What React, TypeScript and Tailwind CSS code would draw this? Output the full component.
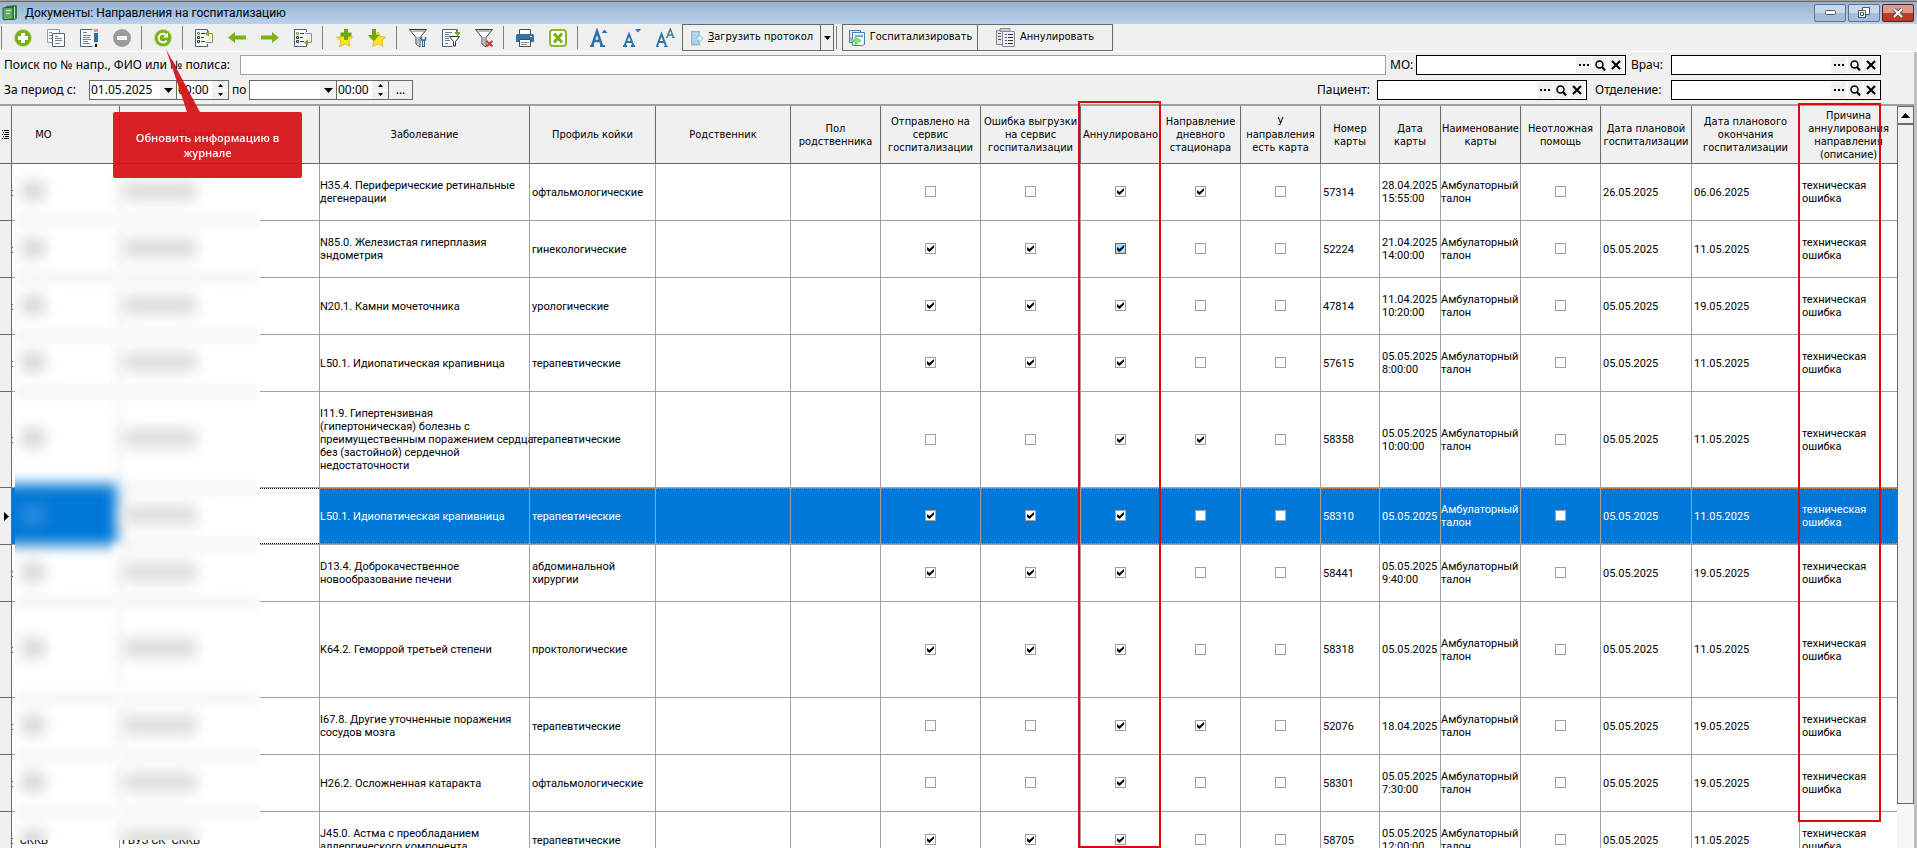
import type { ReactNode } from "react";

type Row = {
  disease: string;
  profile: string;
  flags: [number, number, number, number, number];
  card: string;
  cardDate: string;
  planned: string;
  finish: string;
  tall?: boolean;
  selected?: boolean;
  hot?: boolean;
};

const rows: Row[] = [
  { disease: "H35.4. Периферические ретинальные\nдегенерации", profile: "офтальмологические", flags: [0, 0, 1, 1, 0], card: "57314", cardDate: "28.04.2025\n15:55:00", planned: "26.05.2025", finish: "06.06.2025" },
  { disease: "N85.0. Железистая гиперплазия\nэндометрия", profile: "гинекологические", flags: [1, 1, 1, 0, 0], card: "52224", cardDate: "21.04.2025\n14:00:00", planned: "05.05.2025", finish: "11.05.2025", hot: true },
  { disease: "N20.1. Камни мочеточника", profile: "урологические", flags: [1, 1, 1, 0, 0], card: "47814", cardDate: "11.04.2025\n10:20:00", planned: "05.05.2025", finish: "19.05.2025" },
  { disease: "L50.1. Идиопатическая крапивница", profile: "терапевтические", flags: [1, 1, 1, 0, 0], card: "57615", cardDate: "05.05.2025\n8:00:00", planned: "05.05.2025", finish: "11.05.2025" },
  { disease: "I11.9. Гипертензивная\n(гипертоническая) болезнь с\nпреимущественным поражением сердца\nбез (застойной) сердечной\nнедостаточности", profile: "терапевтические", flags: [0, 0, 1, 1, 0], card: "58358", cardDate: "05.05.2025\n10:00:00", planned: "05.05.2025", finish: "11.05.2025", tall: true },
  { disease: "L50.1. Идиопатическая крапивница", profile: "терапевтические", flags: [1, 1, 1, 0, 0], card: "58310", cardDate: "05.05.2025", planned: "05.05.2025", finish: "11.05.2025", selected: true },
  { disease: "D13.4. Доброкачественное\nновообразование печени", profile: "абдоминальной\nхирургии", flags: [1, 1, 1, 0, 0], card: "58441", cardDate: "05.05.2025\n9:40:00", planned: "05.05.2025", finish: "19.05.2025" },
  { disease: "K64.2. Геморрой третьей степени", profile: "проктологические", flags: [1, 1, 1, 0, 0], card: "58318", cardDate: "05.05.2025", planned: "05.05.2025", finish: "11.05.2025", tall: true },
  { disease: "I67.8. Другие уточненные поражения\nсосудов мозга", profile: "терапевтические", flags: [0, 0, 1, 1, 0], card: "52076", cardDate: "18.04.2025", planned: "05.05.2025", finish: "19.05.2025" },
  { disease: "H26.2. Осложненная катаракта", profile: "офтальмологические", flags: [0, 0, 1, 0, 0], card: "58301", cardDate: "05.05.2025\n7:30:00", planned: "05.05.2025", finish: "19.05.2025" },
  { disease: "J45.0. Астма с преобладанием\nаллергического компонента", profile: "терапевтические", flags: [1, 1, 1, 0, 0], card: "58705", cardDate: "05.05.2025\n12:00:00", planned: "05.05.2025", finish: "11.05.2025" },
];

const columns = [
  { title: "МО", col: "w-[108px]" },
  { title: "Подразделение", col: "w-[200px]" },
  { title: "Заболевание", col: "w-[210px]" },
  { title: "Профиль койки", col: "w-[126px]" },
  { title: "Родственник", col: "w-[135px]" },
  { title: "Пол\nродственника", col: "w-[90px]" },
  { title: "Отправлено на\nсервис\nгоспитализации", col: "w-[100px]" },
  { title: "Ошибка выгрузки\nна сервис\nгоспитализации", col: "w-[100px]" },
  { title: "Аннулировано", col: "w-[80px]" },
  { title: "Направление\nдневного\nстационара", col: "w-[80px]" },
  { title: "У\nнаправления\nесть карта", col: "w-[80px]" },
  { title: "Номер\nкарты", col: "w-[59px]" },
  { title: "Дата\nкарты", col: "w-[61px]" },
  { title: "Наименование\nкарты", col: "w-[80px]" },
  { title: "Неотложная\nпомощь", col: "w-[80px]" },
  { title: "Дата плановой\nгоспитализации", col: "w-[91px]" },
  { title: "Дата планового\nокончания\nгоспитализации", col: "w-[108px]" },
  { title: "Причина\nаннулирования\nнаправления\n(описание)", col: "" },
];

const flagNames = ["Отправлено на сервис", "Ошибка выгрузки", "Аннулировано", "Дневной стационар", "Есть карта"];

function Svg({ children }: { children: ReactNode }) {
  return (
    <svg width="20" height="20" viewBox="0 0 20 20" fill="none" aria-hidden="true">
      {children}
    </svg>
  );
}

const AddIcon = () => (
  <Svg>
    <circle cx="10" cy="10" r="9" fill="#b9dc7c" />
    <circle cx="10" cy="10" r="8" fill="#76b119" />
    <path d="M10 5v10M5 10h10" stroke="#fff" strokeWidth="4" />
  </Svg>
);

const CopyIcon = () => (
  <Svg>
    <path d="M1.5 1.5h12v13h-12z" fill="#f7f9fa" stroke="#8d9ca8" />
    <path d="M3 4.5h3M3 7.5h3M3 10.5h3" stroke="#7c8e9b" />
    <path d="M6.5 5.5h12v13h-12z" fill="#fff" stroke="#4b6478" />
    <path d="M9 8.5h3M9 10.5h7M9 12.5h7M9 15.5h5" stroke="#6d8190" />
  </Svg>
);

const EditIcon = () => (
  <Svg>
    <path d="M13.5 1.5h-12v17h12" fill="#fff" stroke="#4b6478" />
    <path d="M4 4.5h4M4 7.5h8M4 9.5h7M4 11.5h8M4 13.5h5M4 15.5h7" stroke="#6d8190" />
    <path d="M15 1h4v3h-4z" fill="#ea8f86" />
    <path d="M15 5h4v9h-4z" fill="#2b6fa3" />
    <path d="M15 14h4l-1 2h-2z" fill="#e9cda5" />
    <path d="M16 16h2v3h-2z" fill="#111" />
  </Svg>
);

const MinusIcon = () => (
  <Svg>
    <circle cx="10" cy="10" r="9" fill="#9b9b9b" />
    <path d="M5 8h10v4H5z" fill="#fff" />
    <path d="M6 9h8v2H6z" fill="#eee" />
  </Svg>
);

const RefreshIcon = () => (
  <Svg>
    <circle cx="10" cy="10" r="9" fill="#b9dc7c" />
    <circle cx="10" cy="10" r="8" fill="#76b119" />
    <path d="M13.6 12.6a4.4 4.4 0 1 1-.6-5.8" stroke="#fff" strokeWidth="2" />
    <path d="M15 4.500v5h-5z" fill="#fff" />
  </Svg>
);

const ListBox = () => (
  <>
    <path d="M1.5 1.5h12v17h-12z" fill="#f7f9fa" />
    <path d="M13.5 4V1.5h-12v17h12V16" stroke="#4b6478" />
    <path d="M3.5 4.5h2v2h-2z" stroke="#76a52c" />
    <path d="M3.5 8.5h2v2h-2zM3.5 12.5h2v2h-2z" stroke="#333" />
    <path d="M7 5.5h4M7 9.5h3M7 13.5h4" stroke="#333" />
  </>
);

const ListUpIcon = () => (
  <Svg>
    <ListBox />
    <path d="M12 14.5h6.500v-9H14" stroke="#8aa94a" />
    <path d="M15 2.500v6l-4-3z" fill="#76a52c" />
  </Svg>
);

const ListDownIcon = () => (
  <Svg>
    <ListBox />
    <path d="M12 5.500h6.500v9H14" stroke="#8aa94a" />
    <path d="M15 11.500v6l-4-3z" fill="#76a52c" />
  </Svg>
);

const LeftIcon = () => (
  <Svg>
    <path d="M1 9.500l7-5.500v3.500h11v4H8V15z" fill="#7ab317" />
  </Svg>
);

const RightIcon = () => (
  <Svg>
    <path d="M19 9.500L12 4v3.500H1v4h11V15z" fill="#7ab317" />
  </Svg>
);

const STAR = "M11 4l2.300 4.600 5.200.6-3.700 3.600 1 5.500L11 15.800 5.700 18.500l1.200-5.600L2.500 9.200l5.700-.6z";

const StarAddIcon = () => (
  <Svg>
    <path d={STAR} fill="#ffe51f" stroke="#e5b923" />
    <path d="M12 1v11M6.500 6.500h11" stroke="#6aa812" strokeWidth="4" />
  </Svg>
);

const StarDownIcon = () => (
  <Svg>
    <path d={STAR} fill="#ffe51f" stroke="#e5b923" />
    <path d="M5 1h4v6h3.500L7 13 1 7h4z" fill="#6aa812" />
  </Svg>
);

const Funnel = () => (
  <>
    <path d="M1.500 1.500h17l-6.500 8v9.500L8 16V9.500z" fill="#fff" stroke="#3c3c3c" />
    <path d="M3.500 3h13M10 9v7" stroke="#777" />
  </>
);

const FilterIcon = () => (
  <Svg>
    <Funnel />
    <path d="M15.500 12v7" stroke="#2b6fa3" strokeWidth="3" />
    <path d="M13.500 9v3h4V9" stroke="#2b6fa3" strokeWidth="1.500" />
    <path d="M15.500 13v5" stroke="#d8ecfa" />
  </Svg>
);

const FilterListIcon = () => (
  <Svg>
    <path d="M15.500 5V1.500h-14v17h10" fill="#f7f9fa" stroke="#4b6478" />
    <path d="M4 4.500h7M4 6.500h4M4 8.500h4M4 10.500h4M4 12.500h5M4 15.500h3" stroke="#6d8190" />
    <path d="M8.500 8.500h10l-4 5v4.500h-2v-4.500z" fill="#fff" stroke="#333" />
    <path d="M16.500 1v4M14 4.500h5l-2.500 3z" fill="#76a52c" stroke="#76a52c" />
  </Svg>
);

const FilterClearIcon = () => (
  <Svg>
    <Funnel />
    <path d="M12.500 13l6 5.500M18.500 13l-6 5.500" stroke="#c5352b" strokeWidth="2" />
  </Svg>
);

const PrintIcon = () => (
  <Svg>
    <path d="M4.500 1.500h11v6h-11z" fill="#fff" stroke="#4a4a4a" />
    <path d="M2 6h16l1 1v7H1V7z" fill="#2f74a8" />
    <path d="M4.500 11.500h11v7h-11z" fill="#fff" stroke="#4a4a4a" />
    <path d="M6 14.500h8M6 16.500h6" stroke="#888" />
    <path d="M15 8.500h2" stroke="#fff" />
  </Svg>
);

const ExcelIcon = () => (
  <Svg>
    <rect x="2" y="2" width="16" height="16" rx="3" fill="#fff" stroke="#8bb62f" strokeWidth="2" />
    <path d="M6 5.500l8 9M14 5.500l-8 9" stroke="#76b119" strokeWidth="3" />
  </Svg>
);

// font size icons: strokes only, two weights
const FontUpIcon = () => (
  <Svg>
    <path d="M3 18L8 3l5 15M5 13h6" stroke="#2f74a8" strokeWidth="2.500" />
    <path d="M1 18h4M11 18h5" stroke="#2f74a8" strokeWidth="2" />
    <path d="M12.500 5L15.500 1.500l3 3.500z" fill="#2f74a8" />
  </Svg>
);

const FontDownIcon = () => (
  <Svg>
    <path d="M2.500 18L7 6 11.500 18M4.500 14h5" stroke="#2f74a8" strokeWidth="2" />
    <path d="M1 18h4M9 18h4" stroke="#2f74a8" strokeWidth="2" />
    <path d="M13 1l3 3.500L19 1z" fill="#2f74a8" />
  </Svg>
);

const FontBothIcon = () => (
  <Svg>
    <path d="M2 18L6.500 6 11 18M4 14h5" stroke="#2f74a8" strokeWidth="2" />
    <path d="M1 18.500h3M9 18.500h4" stroke="#2f74a8" />
    <path d="M12 9.500L15.300 1 18.500 9.500M13.500 7h4" stroke="#3f7cab" strokeWidth="1.500" />
    <path d="M11 9.500h2M17 9.500h3" stroke="#4f87b0" />
  </Svg>
);

const LoadIcon = () => (
  <svg width="14" height="18" viewBox="0 0 14 18" fill="none" aria-hidden="true">
    <path d="M1.500 2.500h8v13h-8z" fill="#a9cbe2" stroke="#90b7d2" />
    <path d="M3 5h5M3 8h4M3 11h4" stroke="#d4e8f5" />
    <path d="M7 7.500h2V5l4 4.500L9 14v-2.500H7z" fill="#d6effc" stroke="#8ec3e0" />
    <path d="M1 16.500h10" stroke="#c4d9e6" />
  </svg>
);

const HospitalizeIcon = () => (
  <svg width="18" height="18" viewBox="0 0 18 18" fill="none" aria-hidden="true">
    <path d="M1.500 1.500h11v12h-11z" fill="#d7eafa" stroke="#4583bd" />
    <path d="M4.500 3.500h12v12l-2 1h-10z" fill="#eaf5fd" stroke="#4583bd" />
    <path d="M7 6h8v2H7z" fill="#68aee6" />
    <path d="M2 9c0 3 2 4 5 4v3l6-4.500L7 8v3c-2 0-3-1-3-2z" fill="#8ddc6f" stroke="#5cb84a" strokeWidth=".5" />
  </svg>
);

const CancelIcon = () => (
  <svg width="20" height="20" viewBox="0 0 20 20" fill="none" aria-hidden="true">
    <path d="M.5 2.500h7v14h-7z" fill="#e3e3ea" stroke="#83838f" />
    <path d="M4 .5h10v3H4z" fill="#c8c8d2" stroke="#8d8d99" />
    <path d="M6.500 3.500h12v15h-12z" fill="#eeeef4" stroke="#888896" />
    <path d="M2 5.500h3M2 8.500h3M2 11.500h3M9 6.500h2M9 9.500h2M9 12.500h2M9 15.500h2" stroke="#555562" />
    <path d="M12 6.500h5M12 9.500h5M12 12.500h5M12 15.500h5" stroke="#30303c" />
  </svg>
);

const BookIcon = () => (
  <svg width="16" height="16" viewBox="0 0 16 16" fill="none" aria-hidden="true">
    <path d="M4 1l10-1 1 1v12l-2 2H2z" fill="#2c7a3c" />
    <path d="M1 3l10-1v12l-9 1-1-1z" fill="#63a968" stroke="#216531" />
    <path d="M4 5.500h5M4 8.500h4" stroke="#d5efd2" />
    <path d="M12.500 2v12" stroke="#cfe6cd" />
  </svg>
);

type Tool = [string, () => ReactNode];

const toolGroups: Tool[][] = [
  [["Добавить", AddIcon], ["Копировать", CopyIcon], ["Изменить", EditIcon], ["Удалить", MinusIcon]],
  [["Обновить", RefreshIcon]],
  [["В начало", ListUpIcon], ["Назад", LeftIcon], ["Вперед", RightIcon], ["В конец", ListDownIcon]],
  [["В избранное", StarAddIcon], ["Из избранного", StarDownIcon]],
  [["Фильтр", FilterIcon], ["Список фильтров", FilterListIcon], ["Снять фильтр", FilterClearIcon]],
  [["Печать", PrintIcon], ["Excel", ExcelIcon]],
  [["Крупнее", FontUpIcon], ["Мельче", FontDownIcon], ["Шрифт", FontBothIcon]],
];

const Separator = () => <div className="ml-[2px] mr-[5px] h-[23px] w-px shrink-0 bg-[#808080]" />;

const Caret = ({ up }: { up?: boolean }) => (
  <svg width="9" height="5" viewBox="0 0 9 5" aria-hidden="true">
    <path d={up ? "M0 5L4.500 0 9 5z" : "M0 0h9L4.500 5z"} fill="#000" />
  </svg>
);

function Toolbar() {
  return (
    <div className="-ml-px flex h-[28px] items-center border-b border-white">
      {toolGroups.map((group, i) => (
        <div key={i} className="flex items-center">
          <Separator />
          {group.map(([name, Icon]) => (
            <button key={name} type="button" aria-label={name} className="flex h-[26px] w-[33px] items-center justify-center pr-[2px]">
              <Icon />
            </button>
          ))}
        </div>
      ))}
      <div className="flex h-[27px] border border-[#696969]">
        <button type="button" className="flex w-[137px] items-center justify-center gap-1">
          <LoadIcon />
          <span><u>З</u>агрузить протокол</span>
        </button>
        <button type="button" aria-label="Еще" className="flex w-[13px] items-center justify-center border-l border-[#696969]">
          <svg width="7" height="4" viewBox="0 0 7 4"><path d="M0 0h7L3.500 4z" fill="#000" /></svg>
        </button>
      </div>
      <Separator />
      <button type="button" className="flex h-[27px] w-[136px] items-center justify-center gap-1 border border-[#696969]">
        <HospitalizeIcon />
        Госпитализировать
      </button>
      <button type="button" className="flex h-[27px] w-[135px] items-center justify-center gap-1 border border-l-0 border-[#696969]">
        <CancelIcon />
        Аннулировать
      </button>
    </div>
  );
}

function Lookup({ id, label, labelClass }: { id: string; label: string; labelClass: string }) {
  return (
    <div className="flex h-5 shrink-0 items-center">
      <label htmlFor={id} className={labelClass}>{label}</label>
      <div className="flex h-5 w-[210px] items-center gap-[2px] border border-black bg-white pr-[2px]">
        <input id={id} type="text" className="h-full min-w-0 flex-1 px-1 outline-none" />
        <button type="button" aria-label="Выбрать" className="flex h-4 w-[15px] items-center justify-center bg-[#f0f0f0]">
          <svg width="10" height="2"><path d="M0 0h2v2H0zM4 0h2v2H4zM8 0h2v2H8z" fill="#000" /></svg>
        </button>
        <button type="button" aria-label="Найти" className="flex h-4 w-[14px] items-center justify-center bg-[#f0f0f0]">
          <svg width="11" height="11" viewBox="0 0 11 11" fill="none" stroke="#000">
            <circle cx="4.500" cy="4.500" r="3.500" strokeWidth="1.500" />
            <path d="M7 7l3 3.500" strokeWidth="2" />
          </svg>
        </button>
        <button type="button" aria-label="Очистить" className="flex h-4 w-[14px] items-center justify-center bg-[#f0f0f0]">
          <svg width="10" height="10" viewBox="0 0 10 10" stroke="#000" strokeWidth="2"><path d="M1 1l8 8M9 1L1 9" /></svg>
        </button>
      </div>
    </div>
  );
}

function DateBox({ value, label }: { value: string; label: string }) {
  return (
    <div className="flex h-5 w-[88px] border border-[#696969] bg-white">
      <input aria-label={label} defaultValue={value} className="min-w-0 flex-1 pl-px outline-none" />
      <button type="button" aria-label="Календарь" className="flex w-4 items-center justify-center bg-[#f0f0f0]"><Caret /></button>
    </div>
  );
}

function TimeBox({ label }: { label: string }) {
  return (
    <div className="flex h-5 w-[52px] border border-l-0 border-[#696969] bg-white">
      <input aria-label={label} defaultValue="00:00" className="min-w-0 flex-1 pl-px outline-none" />
      <div className="flex w-4 flex-col">
        <button type="button" aria-label="Больше" className="flex flex-1 items-center justify-center border-b border-white bg-[#f0f0f0]">
          <svg width="5" height="3"><path d="M0 3L2.500 0 5 3z" /></svg>
        </button>
        <button type="button" aria-label="Меньше" className="flex flex-1 items-center justify-center bg-[#f0f0f0]">
          <svg width="5" height="3"><path d="M0 0h5L2.500 3z" /></svg>
        </button>
      </div>
    </div>
  );
}

function Filters() {
  return (
    <div className="flex flex-col gap-[5px] pt-[3px] pr-[33px] pb-1 pl-1 font-['Noto_Sans',sans-serif] text-[12px]">
      <div className="flex h-5 items-center">
        <label htmlFor="search" className="w-[236px] shrink-0 whitespace-nowrap">Поиск по № напр., ФИО или № полиса:</label>
        <input id="search" type="text" className="h-5 min-w-0 flex-1 border border-[#a0a0a0] bg-white px-1 outline-none" />
        <Lookup id="mo" label="МО:" labelClass="w-[30px] pl-1" />
        <Lookup id="doctor" label="Врач:" labelClass="w-[45px] pl-[5px]" />
      </div>
      <div className="flex h-5 items-center">
        <span className="w-[85px] shrink-0">За период с:</span>
        <DateBox value="01.05.2025" label="Дата с" />
        <TimeBox label="Время с" />
        <span className="w-5 pl-[3px] leading-4">по</span>
        <DateBox value="" label="Дата по" />
        <TimeBox label="Время по" />
        <button type="button" className="h-5 w-6 border border-l-0 border-[#696969]">...</button>
        <div className="flex-1" />
        <Lookup id="patient" label="Пациент:" labelClass="w-[60px]" />
        <Lookup id="department" label="Отделение:" labelClass="w-[84px] pl-2" />
      </div>
    </div>
  );
}

function Check({ on, hot, label }: { on: boolean; hot?: boolean; label: string }) {
  return (
    <div className="relative mx-auto size-[11px]">
      <input
        type="checkbox"
        aria-label={label}
        defaultChecked={on}
        className={hot ? "peer block size-[11px] appearance-none border border-[#0078d7] bg-[#b5d8f5]" : "peer block size-[11px] appearance-none border border-[#a0a0a0] bg-white"}
      />
      <svg width="11" height="11" viewBox="0 0 11 11" className="pointer-events-none absolute inset-0 hidden peer-checked:block">
        <path d="M2 4l2.500 2L9 2v2.500L4.500 9 2 7z" fill="#000" />
      </svg>
    </div>
  );
}

function Cell({ row, children, last, check, wide }: { row: Row; children?: ReactNode; last?: boolean; check?: boolean; wide?: boolean }) {
  const base = "relative border-b border-[#a0a0a0] text-left whitespace-pre";
  const edge = last ? "" : "border-r";
  const pad = check ? "pr-px pb-px" : wide ? "z-10" : "pl-[2px]";
  const tone = row.selected
    ? "bg-[#0078d7] text-white before:absolute before:inset-x-0 before:top-0 before:border-t before:border-dotted before:border-[#e0924a] after:absolute after:inset-x-0 after:bottom-0 after:border-b after:border-dotted after:border-[#e0924a]"
    : "bg-white";
  return <td className={`${base} ${edge} ${pad} ${tone}`}>{children}</td>;
}

function Journal() {
  return (
    <table className="w-full table-fixed border-separate border-spacing-0 leading-[13px]">
      <colgroup>
        <col className="w-[12px]" />
        {columns.map((c) => <col key={c.title} className={c.col} />)}
      </colgroup>
      <thead>
        <tr className="h-[58px]">
          <th className="border-r border-b border-[#696969] pl-[2px]">
            <svg width="7" height="10" viewBox="0 0 7 10" stroke="#000">
              <path d="M0 .5h1M2 .5h5M1 2.500h1M3 2.500h4M0 4.500h1M2 4.500h5M1 6.500h1M3 6.500h4M0 8.500h1M2 8.500h5" />
            </svg>
          </th>
          {columns.map((c, i) => (
            <th
              key={c.title}
              className={`border-b border-[#696969] font-normal whitespace-pre ${i < columns.length - 1 ? "border-r" : ""} ${i === 0 ? "pr-[44px]" : ""}`}
            >
              {c.title}
            </th>
          ))}
        </tr>
      </thead>
      <tbody className="font-['Roboto',sans-serif]">
        {rows.map((row, i) => (
          <tr key={i} className={row.tall ? "h-[96px]" : "h-[57px]"}>
            <td className="border-r border-b border-[#696969] pl-1">
              {row.selected && <svg width="5" height="9" viewBox="0 0 5 9"><path d="M0 0l5 4.500L0 9z" /></svg>}
            </td>
            <td className={`border-r border-b border-[#a0a0a0] whitespace-pre ${row.selected ? "bg-[#0078d7] text-white" : "bg-white"}`}>
              <span className="-ml-px text-[#0a5a96]">:</span>
              <span className="ml-[6px]">СККБ</span>
            </td>
            <td className={`relative border-r border-b border-[#a0a0a0] bg-white pl-[2px] whitespace-pre ${row.selected ? "before:absolute before:inset-x-0 before:top-0 before:border-t before:border-dotted before:border-black after:absolute after:inset-x-0 after:bottom-0 after:border-b after:border-dotted after:border-black" : ""}`}>
              ГБУЗ СК "СККБ"
            </td>
            <Cell row={row} wide>{row.disease}</Cell>
            <Cell row={row}>{row.profile}</Cell>
            <Cell row={row} />
            <Cell row={row} />
            {row.flags.map((f, n) => (
              <Cell key={n} row={row} check>
                <Check on={f === 1} hot={row.hot && n === 2} label={flagNames[n]} />
              </Cell>
            ))}
            <Cell row={row}>{row.card}</Cell>
            <Cell row={row}>{row.cardDate}</Cell>
            <Cell row={row} wide>{"Амбулаторный\nталон"}</Cell>
            <Cell row={row} check><Check on={false} label="Неотложная помощь" /></Cell>
            <Cell row={row}>{row.planned}</Cell>
            <Cell row={row}>{row.finish}</Cell>
            <Cell row={row} last>{"техническая\nошибка"}</Cell>
          </tr>
        ))}
      </tbody>
    </table>
  );
}

// hides the organisation names in the first two columns
function Redaction() {
  return (
    <div className="absolute top-[58px] bottom-2 left-[15px] w-[245px] overflow-hidden bg-white">
      {rows.map((row, i) => (
        <div key={i} className={`relative flex items-center ${row.tall ? "h-[96px]" : "h-[57px]"}`}>
          <div className="absolute inset-x-0 -bottom-2 h-4 bg-[#f8f8f8] blur-[3px]" />
          <div className="absolute inset-y-0 left-[98px] w-3 bg-[#fafafa] blur-[3px]" />
          {row.selected && <div className="absolute -top-1 bottom-0 -left-4 w-[118px] bg-[#0078d7] blur-[7px]" />}
          <div className={`relative mb-1 ml-[6px] h-5 w-[24px] blur-[7px] ${row.selected ? "bg-[#2a8bdd]" : "bg-[#d8d8d8]"}`} />
          <div className="relative mb-1 ml-[78px] h-5 w-[74px] bg-[#dedede] blur-[7px]" />
        </div>
      ))}
    </div>
  );
}

function ScrollBar() {
  return (
    <div className="flex w-[17px] shrink-0 flex-col bg-[#f7f7f7]">
      <button type="button" aria-label="Вверх" className="flex h-[18px] items-center justify-center border border-[#696969] bg-[#f0f0f0]">
        <Caret up />
      </button>
      <div className="flex-1 border border-[#696969] bg-[#f0f0f0]" />
      <div className="h-11" />
    </div>
  );
}

function Callout() {
  return (
    <div className="absolute top-[49px] left-[113px] w-[189px] opacity-95">
      <svg width="189" height="63" viewBox="0 0 189 63" className="block">
        <path d="M53 0L87 63H74z" fill="#d7161a" />
      </svg>
      <div className="flex h-[66px] items-center justify-center rounded-[2px] bg-[#d7161a] text-center font-['Open_Sans',sans-serif] text-[11px] leading-[15px] font-semibold whitespace-pre text-white">
        {"Обновить информацию в\nжурнале"}
      </div>
    </div>
  );
}

export default function App() {
  return (
    <div className="relative flex h-screen flex-col overflow-hidden bg-[#f0f0f0] font-['DejaVu_Sans_Condensed','Noto_Sans',sans-serif] text-[11px] text-black">
      <header className="flex h-6 shrink-0 items-center border-t border-[#a0a0a0] bg-linear-to-b from-[#96b2d0] to-[#b9d1ec] pr-[3px] pl-[2px] text-[12px] shadow-[inset_0_1px_0_#696969]">
        <BookIcon />
        <h1 className="ml-[7px] flex-1 font-['Roboto',sans-serif]">Документы: Направления на госпитализацию</h1>
        <div className="flex gap-[2px]">
          <button type="button" aria-label="Свернуть" className="flex h-[18px] w-8 items-center justify-center rounded-[2px] border border-[#5a7590] bg-linear-to-b from-[#c6d8ea] from-50% to-[#a4bdd8] to-50%">
            <svg width="11" height="5"><rect x=".5" y=".5" width="10" height="4" rx="1" fill="#fff" stroke="#555" /></svg>
          </button>
          <button type="button" aria-label="Восстановить" className="flex h-[18px] w-8 items-center justify-center rounded-[2px] border border-[#5a7590] bg-linear-to-b from-[#c6d8ea] from-50% to-[#a4bdd8] to-50%">
            <svg width="13" height="12" fill="#fff" stroke="#4a5568">
              <path d="M4.500.5h7v7h-7z" />
              <path d="M.5 3.500h7v7h-7zM2.500 5.500h3v3h-3z" />
            </svg>
          </button>
          <button type="button" aria-label="Закрыть" className="flex h-[18px] w-8 items-center justify-center rounded-[2px] border border-[#5c1a1a] bg-linear-to-b from-[#dd9a8b] from-50% to-[#bf3a24] to-50%">
            <svg width="12" height="10" viewBox="0 0 12 10">
              <path d="M2 1l8 8M10 1L2 9" stroke="#555" strokeWidth="4" />
              <path d="M2 1l8 8M10 1L2 9" stroke="#fff" strokeWidth="2" />
            </svg>
          </button>
        </div>
      </header>
      <Toolbar />
      <main className="flex min-h-0 flex-1 flex-col border-r-3 border-[#c0c0c0]">
        <Filters />
        <div className="relative flex min-h-0 flex-1 overflow-hidden border-t-2 border-[#a0a0a0]">
          <div className="relative min-w-0 flex-1 overflow-hidden">
            <Journal />
            <Redaction />
          </div>
          <ScrollBar />
        </div>
      </main>
      <div className="pointer-events-none absolute top-[101px] bottom-0 left-[1078px] w-[83px] border-2 border-[#dc0a0a]" />
      <div className="pointer-events-none absolute top-[103px] bottom-[26px] left-[1798px] w-[83px] border-2 border-[#dc0a0a]" />
      <Callout />
    </div>
  );
}
